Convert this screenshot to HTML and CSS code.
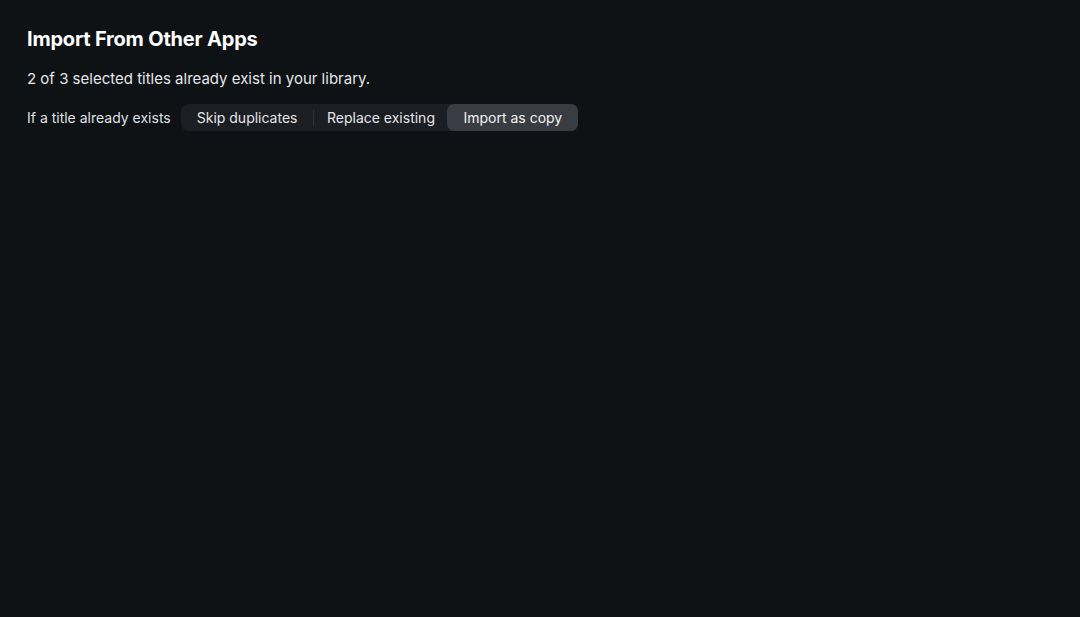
FILE: index.html
```html
<!DOCTYPE html>
<html lang="en">
<head>
<meta charset="utf-8">
<title>Import From Other Apps</title>
<link rel="stylesheet" href="styles.css">
</head>
<body>
<main class="page">
  <h1 class="title">Import From Other Apps</h1>
  <p class="summary">2 of 3 selected titles already exist in your library.</p>
  <div class="option-row">
    <span class="option-label">If a title already exists</span>
    <div class="segmented" role="radiogroup">
      <button class="segment">Skip duplicates</button>
      <span class="divider"></span>
      <button class="segment segment-tight">Replace existing</button>
      <button class="segment is-selected">Import as copy</button>
    </div>
  </div>
</main>
</body>
</html>
```

FILE: styles.css
```css
html, body {
  margin: 0;
  padding: 0;
  background: #0f1215;
  height: 100%;
}
body {
  font-family: Inter, "Noto Sans", sans-serif;
  color: #e6e8eb;
}
.page {
  padding: 26px 27px;
  display: flex;
  flex-direction: column;
}
.title {
  margin: 0;
  font-size: 20px;
  font-weight: 700;
  color: #ffffff;
  line-height: 26px;
  letter-spacing: -0.2px;
}
.summary {
  margin: 16px 0 0;
  font-size: 15px;
  line-height: 22px;
  color: #e4e6e9;
}
.option-row {
  margin-top: 14px;
  display: flex;
  align-items: center;
  gap: 10px;
}
.option-label {
  font-size: 14px;
  color: #dfe1e4;
}
.segmented {
  display: flex;
  align-items: center;
  background: #1b1e22;
  border-radius: 7px;
  height: 27px;
}
.segment {
  font-family: inherit;
  font-size: 14px;
  color: #e4e6e9;
  background: transparent;
  border: 0;
  height: 27px;
  padding: 0 16px;
  border-radius: 7px;
  cursor: pointer;
}
.segment-tight {
  padding: 0 12.5px;
}
.segment.is-selected {
  background: #393c41;
  color: #f2f3f5;
}
.divider {
  width: 1px;
  height: 16px;
  background: #33363b;
}
```
